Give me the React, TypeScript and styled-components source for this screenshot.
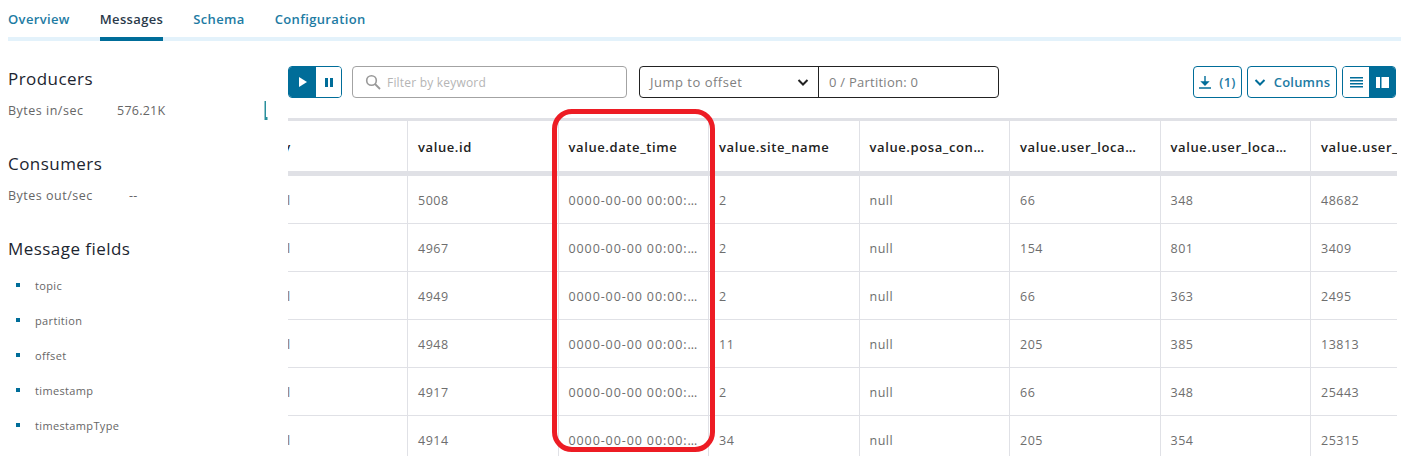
import React from 'react'
import styled, { createGlobalStyle } from 'styled-components'

const teal = '#006d99'
const line = '#e0e1e6'

const Global = createGlobalStyle`
  html, body {
    margin: 0;
    height: 456px;
    overflow: hidden;
    background: #fff;
    font-family: 'Open Sans', 'Noto Sans', sans-serif;
  }
  * { box-sizing: border-box; }
`

const Page = styled.div`
  position: relative;
  width: 1401px;
  height: 456px;
  overflow: hidden;
  padding-left: 8px;
`

const Tabs = styled.nav`
  display: flex;
  gap: 30px;
  height: 41px;
  border-bottom: 4px solid #e3f2fb;
`

const Tab = styled.a<{ $active?: boolean }>`
  height: 41px;
  padding-top: 10px;
  font-size: 13px;
  line-height: 18px;
  font-weight: 600;
  letter-spacing: 0.35px;
  color: ${p => (p.$active ? '#2b3a4a' : '#1d7ba3')};
  border-bottom: 4px solid ${p => (p.$active ? teal : 'transparent')};
`

const Body = styled.div`
  display: flex;
`

const Side = styled.aside`
  width: 280px;
  flex: none;
  padding-top: 26px;
`

const SideTitle = styled.h3`
  margin: 0;
  font-size: 17px;
  line-height: 24px;
  font-weight: 500;
  letter-spacing: 0.45px;
  color: #1c2530;
`

const StatRow = styled.div`
  display: flex;
  align-items: center;
  height: 20px;
  margin: 9px 0 32px;
  font-size: 12.5px;
  letter-spacing: 0.5px;
  color: #666;
`

const StatLabel = styled.span<{ $w: number }>`
  width: ${p => p.$w}px;
`

const StatValue = styled.span`
  letter-spacing: 0.25px;
`

const Spark = styled.svg`
  margin-left: auto;
  margin-right: 20px;
`

const Fields = styled.ul`
  list-style: none;
  margin: 7px 0 0;
  padding: 0;
`

const Field = styled.li`
  display: flex;
  align-items: center;
  height: 35px;
  padding-left: 8px;
  font-size: 11px;
  letter-spacing: 0.35px;
  color: #666;
  &::before {
    content: '';
    width: 4px;
    height: 4px;
    margin-right: 15px;
    margin-top: -1px;
    background: ${teal};
  }
`

const Main = styled.main`
  width: 1109px;
  flex: none;
`

const Toolbar = styled.div`
  display: flex;
  align-items: center;
  height: 32px;
  margin-top: 25px;
`

const Segmented = styled.div`
  display: flex;
  height: 32px;
  border: 1px solid ${teal};
  border-radius: 4px;
  overflow: hidden;
`

const SegButton = styled.span<{ $on?: boolean; $w: number }>`
  display: flex;
  align-items: center;
  justify-content: center;
  width: ${p => p.$w}px;
  background: ${p => (p.$on ? teal : '#fff')};
  color: ${p => (p.$on ? '#fff' : teal)};
`

const Search = styled.div`
  display: flex;
  align-items: center;
  gap: 6px;
  width: 275px;
  height: 32px;
  margin-left: 10px;
  padding-left: 12px;
  border: 1px solid #a3a3a3;
  border-radius: 4px;
  font-size: 12px;
  letter-spacing: 0.2px;
  color: #b5b5b5;
`

const Jump = styled.div`
  display: flex;
  height: 32px;
  margin-left: 12px;
  border: 1px solid #222;
  border-radius: 4px;
  font-size: 13px;
  letter-spacing: 0.5px;
  color: #808080;
`

const JumpSelect = styled.div`
  display: flex;
  align-items: center;
  justify-content: space-between;
  width: 179px;
  padding: 0 9px 0 10px;
  border-right: 1px solid #222;
`

const JumpInput = styled.div`
  display: flex;
  align-items: center;
  width: 179px;
  padding-left: 10px;
  letter-spacing: 0.25px;
`

const Actions = styled.div`
  display: flex;
  gap: 5px;
  margin-left: auto;
  margin-right: 1px;
`

const ActionButton = styled.span<{ $w: number }>`
  display: flex;
  align-items: center;
  justify-content: center;
  gap: 8px;
  width: ${p => p.$w}px;
  height: 32px;
  border: 1px solid ${teal};
  border-radius: 4px;
  font-size: 13px;
  font-weight: 600;
  letter-spacing: 0.2px;
  color: #1d7ba3;
`

const TableClip = styled.div`
  width: 1109px;
  margin-top: 20px;
  overflow: hidden;
`

const Table = styled.table`
  width: 1204px;
  margin-left: -31px;
  table-layout: fixed;
  border-collapse: collapse;
  border-top: 3px solid ${line};
`

const Th = styled.th`
  height: 54px;
  padding: 2px 22px 0 10px;
  text-align: left;
  font-size: 13px;
  font-weight: 600;
  letter-spacing: 0.6px;
  color: #222;
  white-space: nowrap;
  overflow: hidden;
  text-overflow: ellipsis;
  border-left: 1px solid ${line};
  border-bottom: 5px solid ${line};
  &:first-child { border-left: 0; }
`

const Td = styled.td<{ $date?: boolean }>`
  height: 48px;
  padding: 1px 10px 0;
  font-size: 12.5px;
  letter-spacing: ${p => (p.$date ? '0.9px' : '0.5px')};
  color: #6e6e6e;
  white-space: nowrap;
  overflow: hidden;
  text-overflow: ellipsis;
  border-left: 1px solid ${line};
  border-bottom: 1px solid ${line};
  &:first-child { border-left: 0; }
  tr:first-child > & { height: 50px; }
`

const Highlight = styled.div`
  position: absolute;
  left: 552px;
  top: 109px;
  width: 163px;
  height: 343px;
  border: 5px solid #ed1c24;
  border-radius: 20px;
  pointer-events: none;
`

const head = [
  'key',
  'value.id',
  'value.date_time',
  'value.site_name',
  'value.posa_continent',
  'value.user_location_country',
  'value.user_location_region',
  'value.user_location_city',
]

const rows = [
  ['5008', '2', '66', '348', '48682'],
  ['4967', '2', '154', '801', '3409'],
  ['4949', '2', '66', '363', '2495'],
  ['4948', '11', '205', '385', '13813'],
  ['4917', '2', '66', '348', '25443'],
  ['4914', '34', '205', '354', '25315'],
]

const fields = ['topic', 'partition', 'offset', 'timestamp', 'timestampType']

const Chevron = ({ color, size = 12 }: { color: string; size?: number }) => (
  <svg width={size} height={size} viewBox="0 0 12 12" fill="none">
    <path d="M1.5 4 L6 8.5 L10.5 4" stroke={color} strokeWidth="2" />
  </svg>
)

export default function App() {
  return (
    <Page>
      <Global />
      <Tabs>
        <Tab>Overview</Tab>
        <Tab $active>Messages</Tab>
        <Tab>Schema</Tab>
        <Tab>Configuration</Tab>
      </Tabs>
      <Body>
        <Side>
          <SideTitle>Producers</SideTitle>
          <StatRow>
            <StatLabel $w={109}>Bytes in/sec</StatLabel>
            <StatValue>576.21K</StatValue>
            <Spark width="4" height="20" viewBox="0 0 4 20">
              <path d="M0.5 1 H2 V17 H3.5 V20 H0.5 Z" fill="#2a8f9c" />
            </Spark>
          </StatRow>
          <SideTitle>Consumers</SideTitle>
          <StatRow>
            <StatLabel $w={121}>Bytes out/sec</StatLabel>
            <StatValue>--</StatValue>
          </StatRow>
          <SideTitle>Message fields</SideTitle>
          <Fields>
            {fields.map(f => (
              <Field key={f}>{f}</Field>
            ))}
          </Fields>
        </Side>
        <Main>
          <Toolbar>
            <Segmented>
              <SegButton $on $w={27}>
                <svg width="10" height="10" viewBox="0 0 10 10">
                  <path d="M1 0 L9 5 L1 10 Z" fill="currentColor" />
                </svg>
              </SegButton>
              <SegButton $w={25}>
                <svg width="8" height="9" viewBox="0 0 8 9">
                  <path d="M0 0 H3 V9 H0 Z M5 0 H8 V9 H5 Z" fill="currentColor" />
                </svg>
              </SegButton>
            </Segmented>
            <Search>
              <svg width="16" height="16" viewBox="0 0 16 16" fill="none">
                <circle cx="6.5" cy="6.5" r="4.8" stroke="#999" strokeWidth="1.6" />
                <path d="M10 10 L15 15" stroke="#999" strokeWidth="1.8" />
              </svg>
              Filter by keyword
            </Search>
            <Jump>
              <JumpSelect>
                <span>Jump to offset</span>
                <Chevron color="#222" />
              </JumpSelect>
              <JumpInput>0 / Partition: 0</JumpInput>
            </Jump>
            <Actions>
              <ActionButton $w={49}>
                <svg width="12" height="13" viewBox="0 0 12 13" fill="none">
                  <path d="M6 0 V6 H3 L6 9 L9 6 H6" fill={teal} stroke={teal} strokeWidth="1.4" />
                  <path d="M0 12 H12" stroke={teal} strokeWidth="1.5" />
                </svg>
                (1)
              </ActionButton>
              <ActionButton $w={90}>
                <Chevron color={teal} />
                Columns
              </ActionButton>
              <Segmented>
                <SegButton $w={26}>
                  <svg width="13" height="11" viewBox="0 0 13 11">
                    <path d="M0 0 H13 V1.6 H0 Z M0 3 H13 V4.6 H0 Z M0 6 H13 V7.6 H0 Z M0 9 H13 V10.6 H0 Z" fill="currentColor" />
                  </svg>
                </SegButton>
                <SegButton $on $w={26}>
                  <svg width="13" height="11" viewBox="0 0 13 11">
                    <path d="M0 0 H4 V11 H0 Z M5.5 0 H13 V11 H5.5 Z" fill="currentColor" />
                  </svg>
                </SegButton>
              </Segmented>
            </Actions>
          </Toolbar>
          <TableClip>
            <Table>
              <thead>
                <tr>
                  {head.map(h => (
                    <Th key={h}>{h}</Th>
                  ))}
                </tr>
              </thead>
              <tbody>
                {rows.map(r => (
                  <tr key={r[0]}>
                    <Td>null</Td>
                    <Td>{r[0]}</Td>
                    <Td $date>0000-00-00 00:00:00</Td>
                    <Td>{r[1]}</Td>
                    <Td>null</Td>
                    <Td>{r[2]}</Td>
                    <Td>{r[3]}</Td>
                    <Td>{r[4]}</Td>
                  </tr>
                ))}
              </tbody>
            </Table>
          </TableClip>
        </Main>
      </Body>
      <Highlight />
    </Page>
  )
}
